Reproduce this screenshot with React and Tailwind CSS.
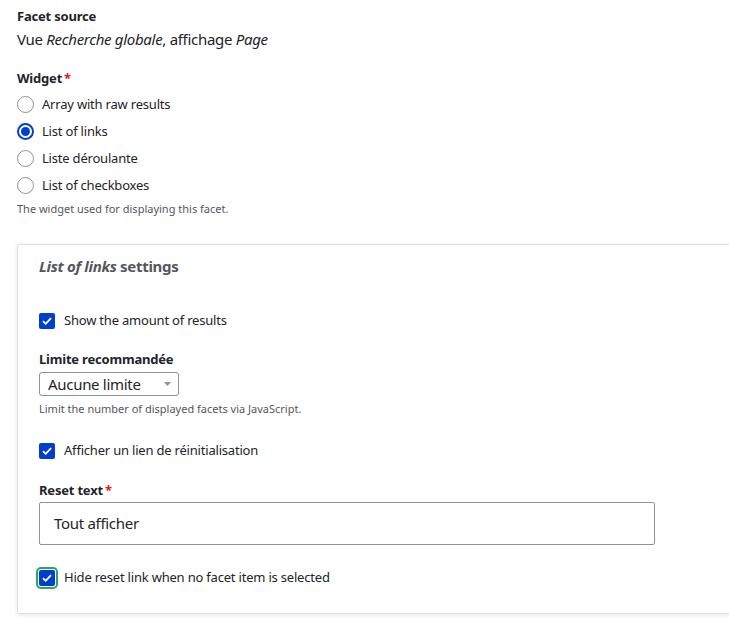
import React, { useState } from "react";

const font = { fontFamily: '"Noto Sans", "Liberation Sans", sans-serif' };

function Radio({ checked, label, onChange }) {
  return (
    <label className="flex items-center h-[27px] cursor-pointer" onClick={onChange}>
      {checked ? (
        <span className="w-[17px] h-[17px] rounded-full border-2 border-[#003ecc] bg-white flex items-center justify-center">
          <span className="w-[9px] h-[9px] rounded-full bg-[#003ecc]" />
        </span>
      ) : (
        <span className="w-[17px] h-[17px] rounded-full border border-[#8e929c] bg-white" />
      )}
      <span className="ml-[8px] text-[13px] tracking-[-0.2px] text-[#232429]">{label}</span>
    </label>
  );
}

function Check({ checked, label, focused, onChange }) {
  return (
    <label className="flex items-center cursor-pointer" onClick={onChange}>
      <span
        className={
          "w-[16px] h-[16px] rounded-[2px] flex items-center justify-center " +
          (checked ? "bg-[#003ecc] " : "border border-[#8e929c] bg-white ") +
          (focused ? "shadow-[0_0_0_1px_#ffffff,0_0_0_3px_#26a769]" : "")
        }
      >
        {checked && (
          <svg width="10" height="8" viewBox="0 0 10 8" fill="none">
            <path d="M1 4.2 3.7 6.8 9 1.2" stroke="white" strokeWidth="1.8" />
          </svg>
        )}
      </span>
      <span className="ml-[9px] text-[13px] tracking-[-0.2px] text-[#232429]">{label}</span>
    </label>
  );
}

export default function App() {
  const [widget, setWidget] = useState("links");
  const [showCount, setShowCount] = useState(true);
  const [showReset, setShowReset] = useState(true);
  const [hideReset, setHideReset] = useState(true);

  const options = [
    ["raw", "Array with raw results"],
    ["links", "List of links"],
    ["dropdown", "Liste déroulante"],
    ["checkbox", "List of checkboxes"],
  ];

  return (
    <div className="bg-white min-h-[619px] w-[729px] overflow-hidden pl-[17px] pt-[8px] text-[#232429]" style={font}>
      <div className="text-[13px] font-bold leading-[17px] tracking-[-0.2px]">Facet source</div>
      <div className="text-[15px] leading-[20px] mt-[4px] tracking-[-0.3px]">
        Vue <em>Recherche globale</em>, affichage <em>Page</em>
      </div>

      <div className="mt-[21px] text-[13px] font-bold leading-[17px] tracking-[-0.2px]">
        Widget<span className="text-[#d72222] ml-[2px]">*</span>
      </div>
      <div className="mt-[4px]">
        {options.map(([key, label]) => (
          <Radio key={key} checked={widget === key} label={label} onChange={() => setWidget(key)} />
        ))}
      </div>
      <div className="text-[11px] text-[#55565b] mt-[3px] leading-[14px]">The widget used for displaying this facet.</div>

      <div className="mt-[28px] border border-[#dedfe4] rounded-[2px] shadow-[0_1px_4px_rgba(0,0,0,0.1)] w-[740px] pl-[21px] pt-[11px] pb-[25px]">
        <div className="text-[15px] font-bold text-[#55565b] leading-[20px] tracking-[-0.3px]">
          <em>List of links</em> settings
        </div>

        <div className="mt-[35px] h-[20px] flex items-center">
          <Check checked={showCount} label="Show the amount of results" onChange={() => setShowCount(!showCount)} />
        </div>

        <div className="mt-[20px] text-[13px] font-bold leading-[17px] tracking-[-0.2px]">Limite recommandée</div>
        <div className="mt-[4px] w-[140px] h-[24px] border border-[#8e929c] rounded-[3px] flex items-center justify-between pl-[8px] pr-[7px]">
          <span className="text-[15px] tracking-[-0.3px]">Aucune limite</span>
          <svg width="7" height="4" viewBox="0 0 7 4">
            <path d="M0 0h7L3.5 4z" fill="#8e929c" />
          </svg>
        </div>
        <div className="text-[11px] text-[#55565b] mt-[6px] leading-[14px]">Limit the number of displayed facets via JavaScript.</div>

        <div className="mt-[25px] h-[20px] flex items-center">
          <Check checked={showReset} label="Afficher un lien de réinitialisation" onChange={() => setShowReset(!showReset)} />
        </div>

        <div className="mt-[21px] text-[13px] font-bold leading-[17px] tracking-[-0.2px]">
          Reset text<span className="text-[#d72222] ml-[2px]">*</span>
        </div>
        <div className="mt-[3px] w-[616px] h-[43px] border border-[#8e929c] rounded-[2px] flex items-center pl-[14px] text-[15px] tracking-[-0.3px]">
          Tout afficher
        </div>

        <div className="mt-[23px] h-[20px] flex items-center">
          <Check
            checked={hideReset}
            focused
            label="Hide reset link when no facet item is selected"
            onChange={() => setHideReset(!hideReset)}
          />
        </div>
      </div>
    </div>
  );
}
